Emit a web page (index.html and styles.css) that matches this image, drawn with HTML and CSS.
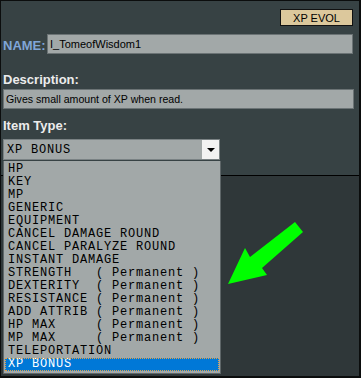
FILE: index.html
```html
<!DOCTYPE html>
<html lang="en">

<head>
    <meta charset="UTF-8">
    <meta name="viewport" content="width=device-width, initial-scale=1.0">
    <title>Item Editor</title>
    <link rel="stylesheet" href="styles.css">
</head>

<body>
    <div class="window">
        <div class="form">
            <div class="top-row">
                <button class="btn-evol">XP EVOL</button>
            </div>
            <div class="name-row">
                <label class="label label-name">NAME:</label>
                <div class="field field-name">I_TomeofWisdom1</div>
            </div>
            <label class="label label-block">Description:</label>
            <div class="field field-desc">Gives small amount of XP when read.</div>
            <label class="label label-block label-type">Item Type:</label>
            <div class="select">
                <span class="select-value">XP BONUS</span>
                <span class="select-arrow"></span>
            </div>
        </div>
        <div class="lower"></div>

        <!-- open list of the select -->
        <ul class="dropdown">
            <li>HP</li>
            <li>KEY</li>
            <li>MP</li>
            <li>GENERIC</li>
            <li>EQUIPMENT</li>
            <li>CANCEL DAMAGE ROUND</li>
            <li>CANCEL PARALYZE ROUND</li>
            <li>INSTANT DAMAGE</li>
            <li>STRENGTH   ( Permanent )</li>
            <li>DEXTERITY  ( Permanent )</li>
            <li>RESISTANCE ( Permanent )</li>
            <li>ADD ATTRIB ( Permanent )</li>
            <li>HP MAX     ( Permanent )</li>
            <li>MP MAX     ( Permanent )</li>
            <li>TELEPORTATION</li>
            <li class="selected">XP BONUS</li>
        </ul>

        <svg class="pointer" width="361" height="378" viewBox="0 0 361 378">
            <polygon points="295,222 303,232 262,268 267,275 228,284 245,248 250,257" fill="#00ff00" />
        </svg>
    </div>
</body>

</html>
```

FILE: styles.css
```css
body {
    margin: 0;
    padding: 0;
    background-color: #2f3739;
    font-family: "Liberation Sans", Arial, sans-serif;
}

.window {
    position: relative;
    width: 361px;
    height: 378px;
    box-sizing: border-box;
    border: 1px solid #0b0d0d;
    border-right-width: 2px;
    border-bottom-width: 2px;
    background-color: #2f3739;
    display: flex;
    flex-direction: column;
    overflow: hidden;
}

.form {
    background-color: #374244;
    height: 174px;
    padding: 0 6px 0 2px;
    box-sizing: border-box;
}

.lower {
    flex: 1;
    border-top: 1px solid #000000;
}

.top-row {
    display: flex;
    justify-content: flex-end;
    padding-top: 8px;
}

.btn-evol {
    width: 73px;
    height: 17px;
    padding: 0;
    margin: 0;
    background-color: #dcc89c;
    border: 1px solid #111111;
    color: #000000;
    font-family: "Liberation Sans", Arial, sans-serif;
    font-size: 11px;
    cursor: pointer;
}

.name-row {
    display: flex;
    align-items: center;
    gap: 3px;
    margin-top: 8px;
}

.label {
    font-weight: bold;
    font-size: 13px;
    color: #ececec;
}

.label-name {
    color: #80a6d8;
    width: 41px;
    padding-top: 2px;
}

.label-block {
    display: block;
    margin-top: 18px;
    height: 17px;
}

.label-type {
    margin-top: 9px;
    height: 21px;
}

.field {
    background-color: #a2a8a8;
    border: 1px solid #6b7375;
    color: #000000;
    font-size: 11px;
    height: 20px;
    line-height: 18px;
    padding: 0 2px;
    box-sizing: border-box;
    white-space: nowrap;
}

.field-name {
    flex: 1;
}

.field-desc {
    width: 351px;
    font-size: 10.6px;
}

.select {
    display: flex;
    align-items: center;
    justify-content: space-between;
    width: 217px;
    height: 21px;
    box-sizing: border-box;
    background-color: #a2a8a8;
    border: 1px solid #7a8284;
}

.select-value {
    font-family: "Liberation Mono", "Courier New", monospace;
    font-size: 12px;
    letter-spacing: 0.8px;
    padding-left: 3px;
    color: #000000;
}

.select-arrow {
    position: relative;
    width: 17px;
    height: 19px;
    background-color: #f2f2f2;
}

.select-arrow::after {
    content: "";
    position: absolute;
    left: 5px;
    top: 8px;
    border-left: 4px solid transparent;
    border-right: 4px solid transparent;
    border-top: 4px solid #000000;
}

.dropdown {
    position: absolute;
    left: 2px;
    top: 160px;
    width: 218px;
    height: 213px;
    box-sizing: border-box;
    margin: 0;
    padding: 2px 1px 0 1px;
    list-style: none;
    background-color: #a2a8a8;
    border: 1px solid #5e6668;
    border-top: none;
}

.dropdown li {
    font-family: "Liberation Mono", "Courier New", monospace;
    font-size: 12px;
    letter-spacing: 0.8px;
    line-height: 13px;
    height: 13px;
    padding-left: 3px;
    white-space: pre;
    color: #000000;
}

.dropdown li.selected {
    background-color: #0078d7;
    color: #ffffff;
    outline: 1px dotted #e8a040;
    outline-offset: -1px;
}

.pointer {
    position: absolute;
    left: -1px;
    top: -1px;
}
```
